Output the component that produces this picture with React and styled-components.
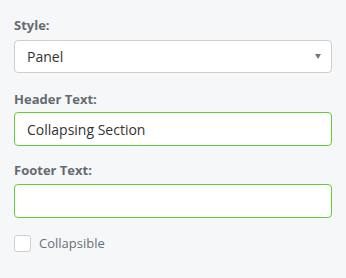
import React, { useState } from 'react'
import styled, { createGlobalStyle } from 'styled-components'

const GlobalStyle = createGlobalStyle`
  body {
    margin: 0;
    background: #f6f7f9;
    font-family: "Open Sans", "Liberation Sans", sans-serif;
  }
`;

const Panel = styled.form`
  padding: 16px 14px 20px 14px;
  width: 346px;
  box-sizing: border-box;
`;

const Field = styled.div`
  margin-bottom: ${props => props.gap || 16}px;
`;

const Label = styled.label`
  display: block;
  font-size: 13px;
  font-weight: 700;
  line-height: 18px;
  color: #666a70;
  margin-bottom: ${props => props.space || 5}px;
`;

const SelectWrap = styled.div`
  position: relative;
`;

const Select = styled.select`
  appearance: none;
  width: 100%;
  height: 33px;
  box-sizing: border-box;
  border: 1px solid #cfcfcf;
  border-radius: 4px;
  background: #fff;
  padding: 0 12px;
  font-family: inherit;
  font-size: 14px;
  color: #333;
  outline: none;
`;

const Caret = styled.span`
  position: absolute;
  right: 11px;
  top: 14px;
  width: 0;
  height: 0;
  border-left: 3.5px solid transparent;
  border-right: 3.5px solid transparent;
  border-top: 5px solid #777;
  pointer-events: none;
`;

const Input = styled.input`
  display: block;
  width: 100%;
  height: 34px;
  box-sizing: border-box;
  border: 1px solid #66cc33;
  border-radius: 4px;
  background: #fff;
  padding: 0 12px;
  font-family: inherit;
  font-size: 14px;
  color: #333;
  outline: none;
`;

const CheckRow = styled.label`
  display: flex;
  align-items: center;
  gap: 8px;
  font-size: 13px;
  color: #6b6f78;
  cursor: pointer;
`;

const Box = styled.span`
  width: 17px;
  height: 17px;
  box-sizing: border-box;
  border: 1px solid #cfcfcf;
  border-radius: 3px;
  background: #fff;
`;

export default function App() {
  const [header, setHeader] = useState('Collapsing Section')
  const [footer, setFooter] = useState('')
  return (
    <>
      <GlobalStyle />
      <Panel onSubmit={e => e.preventDefault()}>
        <Field gap={17}>
          <Label space={6}>Style:</Label>
          <SelectWrap>
            <Select defaultValue="panel">
              <option value="panel">Panel</option>
              <option value="plain">Plain</option>
            </Select>
            <Caret />
          </SelectWrap>
        </Field>
        <Field gap={15}>
          <Label space={4}>Header Text:</Label>
          <Input value={header} onChange={e => setHeader(e.target.value)} />
        </Field>
        <Field gap={16}>
          <Label space={5}>Footer Text:</Label>
          <Input value={footer} onChange={e => setFooter(e.target.value)} />
        </Field>
        <CheckRow>
          <Box />
          Collapsible
        </CheckRow>
      </Panel>
    </>
  )
}
